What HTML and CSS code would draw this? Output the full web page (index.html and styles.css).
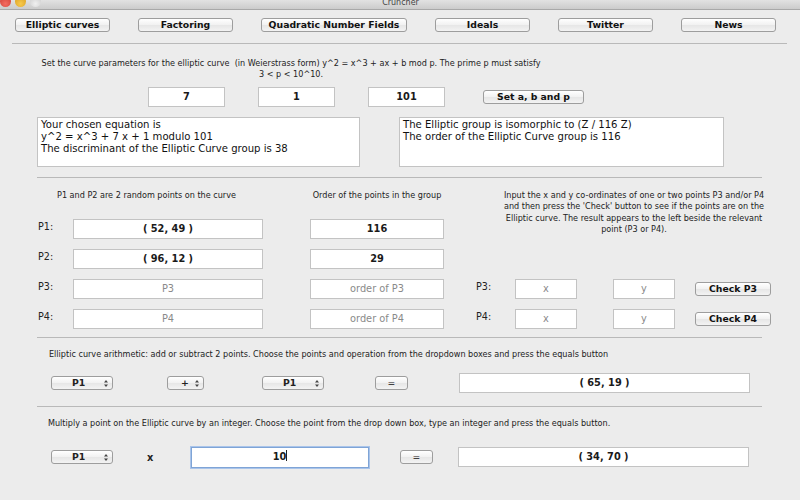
FILE: index.html
```html
<!DOCTYPE html>
<html lang="en">
<head>
    <meta charset="UTF-8">
    <title>Cruncher</title>
    <link rel="stylesheet" href="styles.css">
</head>
<body>
    <div class="titlebar">
        <div class="lights">
            <span class="light red"></span>
            <span class="light yellow"></span>
            <span class="light grey"></span>
        </div>
        <div class="title">Cruncher</div>
    </div>

    <!-- Top navigation -->
    <div class="nav">
        <button class="btn nav-btn">Elliptic curves</button>
        <button class="btn nav-btn">Factoring</button>
        <button class="btn nav-btn wide">Quadratic Number Fields</button>
        <button class="btn nav-btn">Ideals</button>
        <button class="btn nav-btn">Twitter</button>
        <button class="btn nav-btn">News</button>
    </div>
    <div class="rule top-rule"></div>

    <!-- Curve parameters -->
    <p class="intro">Set the curve parameters for the elliptic curve&nbsp; (in Weierstrass form) y^2 = x^3 + ax + b mod p. The prime p must satisfy<br>3 &lt; p &lt; 10^10.</p>
    <div class="params">
        <div class="field param bold">7</div>
        <div class="field param bold">1</div>
        <div class="field param bold">101</div>
        <button class="btn set-btn">Set a, b and p</button>
    </div>
    <div class="outputs">
        <div class="textbox">Your chosen equation is<br>y^2 = x^3 + 7 x + 1 modulo 101<br>The discriminant of the Elliptic Curve group is 38</div>
        <div class="textbox right">The Elliptic group is isomorphic to (Z / 116 Z)<br>The order of the Elliptic Curve group is 116</div>
    </div>
    <div class="rule"></div>

    <!-- Points -->
    <div class="points">
        <div class="note random">P1 and P2 are 2 random points on the curve</div>
        <div class="note order">Order of the points in the group</div>
        <div class="note help">Input the x and y co-ordinates of one or two points P3 and/or P4<br>and then press the 'Check' button to see if the points are on the<br>Elliptic curve. The result appears to the left beside the relevant<br>point (P3 or P4).</div>

        <div class="label c1 r2">P1:</div>
        <div class="field bold c2 r2">( 52, 49 )</div>
        <div class="field bold c4 r2">116</div>

        <div class="label c1 r3">P2:</div>
        <div class="field bold c2 r3">( 96, 12 )</div>
        <div class="field bold c4 r3">29</div>

        <div class="label c1 r4">P3:</div>
        <div class="field muted c2 r4">P3</div>
        <div class="field muted c4 r4">order of P3</div>
        <div class="label c6 r4">P3:</div>
        <div class="field muted c7 r4">x</div>
        <div class="field muted c9 r4">y</div>
        <button class="btn check c11 r4">Check P3</button>

        <div class="label c1 r5">P4:</div>
        <div class="field muted c2 r5">P4</div>
        <div class="field muted c4 r5">order of P4</div>
        <div class="label c6 r5">P4:</div>
        <div class="field muted c7 r5">x</div>
        <div class="field muted c9 r5">y</div>
        <button class="btn check c11 r5">Check P4</button>
    </div>
    <div class="rule"></div>

    <!-- Addition -->
    <p class="note section-note">Elliptic curve arithmetic: add or subtract 2 points. Choose the points and operation from the dropdown boxes and press the equals button</p>
    <div class="calc">
        <div class="popup pt">P1 <svg class="arrows" width="4" height="7" viewBox="0 0 4 7"><path d="M2 0 L4 2.5 L0 2.5 Z M0 4.5 L4 4.5 L2 7 Z" fill="#444"/></svg></div>
        <div class="popup op">+ <svg class="arrows" width="4" height="7" viewBox="0 0 4 7"><path d="M2 0 L4 2.5 L0 2.5 Z M0 4.5 L4 4.5 L2 7 Z" fill="#444"/></svg></div>
        <div class="popup pt second">P1 <svg class="arrows" width="4" height="7" viewBox="0 0 4 7"><path d="M2 0 L4 2.5 L0 2.5 Z M0 4.5 L4 4.5 L2 7 Z" fill="#444"/></svg></div>
        <button class="btn eq">=</button>
        <div class="field bold result">( 65, 19 )</div>
    </div>
    <div class="rule"></div>

    <!-- Multiplication -->
    <p class="note section-note mult">Multiply a point on the Elliptic curve by an integer. Choose the point from the drop down box, type an integer and press the equals button.</p>
    <div class="calc mult-row">
        <div class="popup pt">P1 <svg class="arrows" width="4" height="7" viewBox="0 0 4 7"><path d="M2 0 L4 2.5 L0 2.5 Z M0 4.5 L4 4.5 L2 7 Z" fill="#444"/></svg></div>
        <div class="times">x</div>
        <div class="field bold focused">10<span class="caret"></span></div>
        <button class="btn eq eq2">=</button>
        <div class="field bold result">( 34, 70 )</div>
    </div>
</body>
</html>
```

FILE: styles.css
```css
/* General styling */
body {
    margin: 0;
    width: 800px;
    height: 500px;
    overflow: hidden;
    background: #ececec;
    font-family: "DejaVu Sans", "Liberation Sans", sans-serif;
    color: #222;
}
p {
    margin: 0;
}

/* Window title bar (cut off at the top) */
.titlebar {
    height: 9px;
    background: linear-gradient(#e2e2e2, #cbcbcb);
    border-bottom: 1px solid #a8a8a8;
    display: flex;
    overflow: hidden;
}
.lights {
    display: flex;
    gap: 4px;
    margin-top: -4px;
}
.light {
    width: 11px;
    height: 11px;
    border-radius: 50%;
}
.red { background: radial-gradient(circle at 50% 70%, #f46b60, #c93a31); }
.yellow { background: radial-gradient(circle at 50% 70%, #f7c94d, #d59a1d); }
.grey { background: radial-gradient(circle at 50% 70%, #f0f0f0, #c8c8c8); }
.title {
    flex: 1;
    text-align: center;
    font-size: 8px;
    line-height: 9px;
    margin-top: -2px;
    margin-right: 40px;
    color: #444;
}

/* Buttons */
.btn {
    font-family: inherit;
    font-weight: bold;
    font-size: 9.3px;
    color: #111;
    background: linear-gradient(#ffffff, #f1f1f1 50%, #e6e6e6 51%, #f3f3f3);
    border: 1px solid #9d9d9d;
    border-radius: 3px;
    padding: 0;
    height: 14px;
    line-height: 12px;
}
.nav {
    display: flex;
    gap: 28px;
    padding: 8px 0 0 15px;
}
.nav-btn {
    width: 95px;
}
.nav-btn.wide {
    width: 146px;
}

.rule {
    height: 1px;
    background: #b9b9b9;
    margin-left: 37px;
    width: 725px;
}
.top-rule {
    margin: 11px 0 0 12px;
    width: 775px;
}

/* Parameters */
.intro {
    font-size: 8.1px;
    line-height: 11px;
    text-align: center;
    width: 540px;
    margin: 14px 0 0 21px;
    color: #222;
}
.field {
    background: #fff;
    border: 1px solid #c3c3c3;
    box-sizing: border-box;
    height: 20px;
    font-size: 9.8px;
    line-height: 18px;
    text-align: center;
}
.bold {
    font-weight: bold;
    color: #1a1a1a;
}
.muted {
    color: #8a8a8a;
}
.params {
    display: flex;
    align-items: center;
    margin: 7px 0 0 148px;
}
.param {
    width: 77px;
    margin-right: 33px;
}
.set-btn {
    width: 101px;
    margin-left: 5px;
}
.outputs {
    display: flex;
    gap: 39px;
    margin: 10px 0 10px 37px;
}
.textbox {
    width: 323px;
    height: 50px;
    box-sizing: border-box;
    background: #fff;
    border: 1px solid #c3c3c3;
    font-size: 10.1px;
    line-height: 12px;
    padding: 1px 3px;
    color: #111;
}
.textbox.right {
    width: 325px;
}

/* Points grid */
.points {
    display: grid;
    grid-template-columns: 35px 190px 47px 134px 32px 39px 62px 36px 62px 20px 76px;
    grid-template-rows: 20px 20px 20px 20px 20px;
    row-gap: 10px;
    margin: 11px 0 8px 38px;
}
.note {
    font-size: 8.1px;
    line-height: 11.3px;
    color: #222;
}
.random {
    grid-column: 1 / 3;
    grid-row: 1;
    text-align: center;
    padding-right: 8px;
    padding-top: 1px;
    white-space: nowrap;
}
.order {
    grid-column: 4;
    grid-row: 1;
    text-align: center;
    padding-top: 1px;
    white-space: nowrap;
}
.help {
    grid-column: 5 / 12;
    grid-row: 1 / 3;
    text-align: center;
    white-space: nowrap;
    padding: 1px 0 0 50px;
    margin-right: -3px;
}
.label {
    font-size: 9.6px;
    color: #222;
    padding-top: 2px;
}
.c1 { grid-column: 1; }
.c2 { grid-column: 2; }
.c4 { grid-column: 4; }
.c6 { grid-column: 6; }
.c7 { grid-column: 7; }
.c9 { grid-column: 9; }
.c11 { grid-column: 11; }
.r2 { grid-row: 2; }
.r3 { grid-row: 3; }
.r4 { grid-row: 4; }
.r5 { grid-row: 5; }
.check {
    align-self: center;
}

/* Arithmetic rows */
.section-note {
    margin: 11px 0 0 49px;
}
.section-note.mult {
    margin-left: 48px;
}
.calc {
    display: flex;
    align-items: center;
    margin: 13px 0 13px 51px;
}
.mult-row {
    margin-top: 17px;
}
.popup {
    box-sizing: border-box;
    height: 14px;
    font-size: 9.3px;
    font-weight: bold;
    line-height: 12px;
    background: linear-gradient(#ffffff, #f1f1f1 50%, #e6e6e6 51%, #f3f3f3);
    border: 1px solid #9d9d9d;
    border-radius: 3px;
    display: flex;
    justify-content: space-between;
    align-items: center;
    padding: 0 4px 0 20px;
}
.popup.pt {
    width: 62px;
}
.popup.op {
    width: 37px;
    padding-left: 13px;
    margin-left: 54px;
}
.popup.second {
    margin-left: 58px;
}
.eq {
    width: 33px;
    margin-left: 51px;
    font-weight: normal;
}
.result {
    width: 291px;
    margin-left: 51px;
}
.times {
    font-size: 9.8px;
    font-weight: bold;
    margin-left: 34px;
    width: 44px;
}
.focused {
    width: 178px;
    height: 21px;
    border: 1px solid #7fa4d6;
    box-shadow: 0 0 0 1px #a9c4ea;
}
.caret {
    display: inline-block;
    width: 1px;
    height: 11px;
    background: #222;
    vertical-align: middle;
    margin-top: -2px;
}
.eq2 {
    margin-left: 31px;
}
.eq2 + .result {
    margin-left: 25px;
}
```
